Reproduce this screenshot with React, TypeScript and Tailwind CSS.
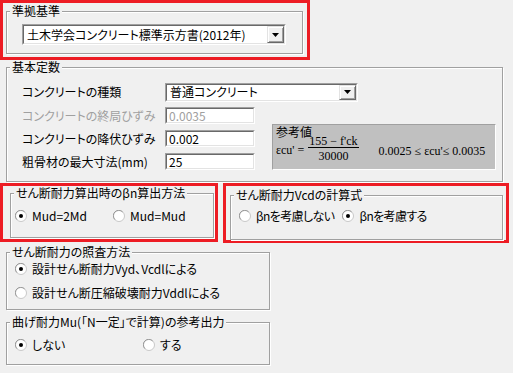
import React from "react";

function Group({
  title,
  className,
  children,
}: {
  title: string;
  className: string;
  children?: React.ReactNode;
}) {
  return (
    <div
      className={`relative border border-[#a0a0a0] shadow-[inset_1px_1px_0_#ffffff,1px_1px_0_#ffffff] ${className}`}
    >
      <span className="absolute left-[3px] top-[-8px] bg-[#f0f0f0] px-[2px] text-[12px] leading-[14px] whitespace-nowrap">
        {title}
      </span>
      {children}
    </div>
  );
}

function Radio({
  label,
  checked,
  className = "",
  labelClass = "",
}: {
  label: string;
  checked?: boolean;
  className?: string;
  labelClass?: string;
}) {
  return (
    <div className={`flex items-center h-[14px] ${className}`}>
      <svg width="12" height="12" viewBox="0 0 12 12" className="shrink-0">
        <circle cx="6" cy="6" r="5.5" fill="#ffffff" stroke="#c8c8c8" />
        <path d="M1.9 9.6 A5.2 5.2 0 0 1 9.6 1.9" fill="none" stroke="#9a9a9a" strokeWidth="1" />
        {checked && <circle cx="6" cy="6" r="2" fill="#000000" />}
      </svg>
      <span className={`ml-[5px] whitespace-nowrap ${labelClass}`}>{label}</span>
    </div>
  );
}

function Sunken({
  className,
  children,
}: {
  className: string;
  children?: React.ReactNode;
}) {
  return (
    <div
      className={`border border-t-[#a0a0a0] border-l-[#a0a0a0] border-b-white border-r-white ${className}`}
    >
      <div className="w-full h-full border border-t-[#696969] border-l-[#696969] border-b-[#e3e3e3] border-r-[#e3e3e3] bg-white flex items-center">
        {children}
      </div>
    </div>
  );
}

function Combo({ text, className }: { text: string; className: string }) {
  return (
    <Sunken className={className}>
      <span className="flex-1 pl-[3px] whitespace-nowrap">{text}</span>
      <div className="w-[17px] h-full bg-[#f0f0f0] border border-t-[#e3e3e3] border-l-[#e3e3e3] border-b-[#696969] border-r-[#696969] shadow-[inset_1px_1px_0_#ffffff,inset_-1px_-1px_0_#a0a0a0] flex items-center justify-center">
        <svg width="7" height="4" viewBox="0 0 7 4">
          <path d="M0 0 H7 L3.5 4 Z" fill="#000000" />
        </svg>
      </div>
    </Sunken>
  );
}

function Field({ text, disabled }: { text: string; disabled?: boolean }) {
  return (
    <Sunken className="w-[90px] h-[17px]">
      <span className={`pl-[2px] ${disabled ? "text-[#a0a0a0]" : "text-black"}`}>{text}</span>
    </Sunken>
  );
}

export default function App() {
  return (
    <div className="w-[513px] h-[373px] bg-[#f0f0f0] overflow-hidden text-[12px] leading-[14px] text-black font-['Noto_Sans_CJK_JP','Noto_Sans',sans-serif] [font-feature-settings:'palt']">
      {/* 準拠基準 */}
      <div className="w-[310px] h-[60px] border-[3px] border-[#ed1c24] pl-[3px] pt-[8px]">
        <Group title="準拠基準" className="w-[297px] h-[43px] pl-[15px] pt-[12px]">
          <Combo text="土木学会コンクリート標準示方書(2012年)" className="w-[264px] h-[21px]" />
        </Group>
      </div>

      {/* 基本定数 */}
      <Group title="基本定数" className="ml-[6px] mt-[7px] w-[497px] h-[115px] pl-[15px] pt-[15px]">
        <div className="flex items-center h-[18px]">
          <span className="w-[143px] whitespace-nowrap">コンクリートの種類</span>
          <Combo text="普通コンクリート" className="w-[193px] h-[19px]" />
        </div>
        <div className="flex items-end mt-[6px]">
          <div className="flex flex-col gap-[6px]">
            <div className="flex items-center h-[17px]">
              <span className="w-[143px] whitespace-nowrap text-[#a0a0a0]">コンクリートの終局ひずみ</span>
              <Field text="0.0035" disabled />
            </div>
            <div className="flex items-center h-[17px]">
              <span className="w-[143px] whitespace-nowrap">コンクリートの降伏ひずみ</span>
              <Field text="0.002" />
            </div>
            <div className="flex items-center h-[17px]">
              <span className="w-[143px] whitespace-nowrap">粗骨材の最大寸法(mm)</span>
              <Field text="25" />
            </div>
          </div>
          <div className="ml-[17px] w-[224px] h-[46px] bg-[#c0c0c0] border border-t-[#a0a0a0] border-l-[#a0a0a0] border-b-white border-r-white pl-[3px]">
            <div className="leading-[14px]">参考値</div>
            <div className="flex items-center mt-[-3px] font-['Liberation_Serif',serif] text-[12px] [font-feature-settings:normal]">
              <span className="whitespace-nowrap">εcu' =</span>
              <div className="flex flex-col items-center ml-[4px]">
                <span className="leading-[11px] px-[1px] border-b border-black whitespace-nowrap">155 − f'ck</span>
                <span className="leading-[14px] pt-[1px]">30000</span>
              </div>
              <span className="ml-[20px] whitespace-nowrap pt-[2px]">0.0025 ≤ εcu'≤ 0.0035</span>
            </div>
          </div>
        </div>
      </Group>

      {/* red pair */}
      <div className="flex items-start gap-[5px] mt-[1px]">
        <div className="w-[218px] h-[59px] border-[3px] border-[#ed1c24] pl-[7px] pt-[7px]">
          <Group title="せん断耐力算出時のβn算出方法" className="w-[204px] h-[45px] pl-[4px] pt-[15px]">
            <div className="flex">
              <Radio label="Mud=2Md" checked className="w-[98px]" />
              <Radio label="Mud=Mud" />
            </div>
          </Group>
        </div>
        <div className="w-[286px] h-[60px] border-[3px] border-[#ed1c24] pl-[4px] pt-[9px]">
          <Group title="せん断耐力Vcdの計算式" className="w-[273px] h-[45px] pl-[8px] pt-[13px]">
            <div className="flex">
              <Radio label="βnを考慮しない" className="mr-[8px]" labelClass="tracking-[-0.6px]" />
              <Radio label="βnを考慮する" checked labelClass="tracking-[-0.6px]" />
            </div>
          </Group>
        </div>
      </div>

      {/* せん断耐力の照査方法 */}
      <Group title="せん断耐力の照査方法" className="ml-[6px] mt-[9px] w-[264px] h-[58px] pl-[8px] pt-[9px]">
        <div className="flex flex-col gap-[10px]">
          <Radio label="設計せん断耐力Vyd、Vcdlによる" checked />
          <Radio label="設計せん断圧縮破壊耐力Vddlによる" />
        </div>
      </Group>

      {/* 曲げ耐力 */}
      <Group title="曲げ耐力Mu(「N一定」で計算)の参考出力" className="ml-[6px] mt-[12px] w-[264px] h-[43px] pl-[8px] pt-[15px]">
        <div className="flex">
          <Radio label="しない" checked className="w-[128px]" />
          <Radio label="する" />
        </div>
      </Group>
    </div>
  );
}
